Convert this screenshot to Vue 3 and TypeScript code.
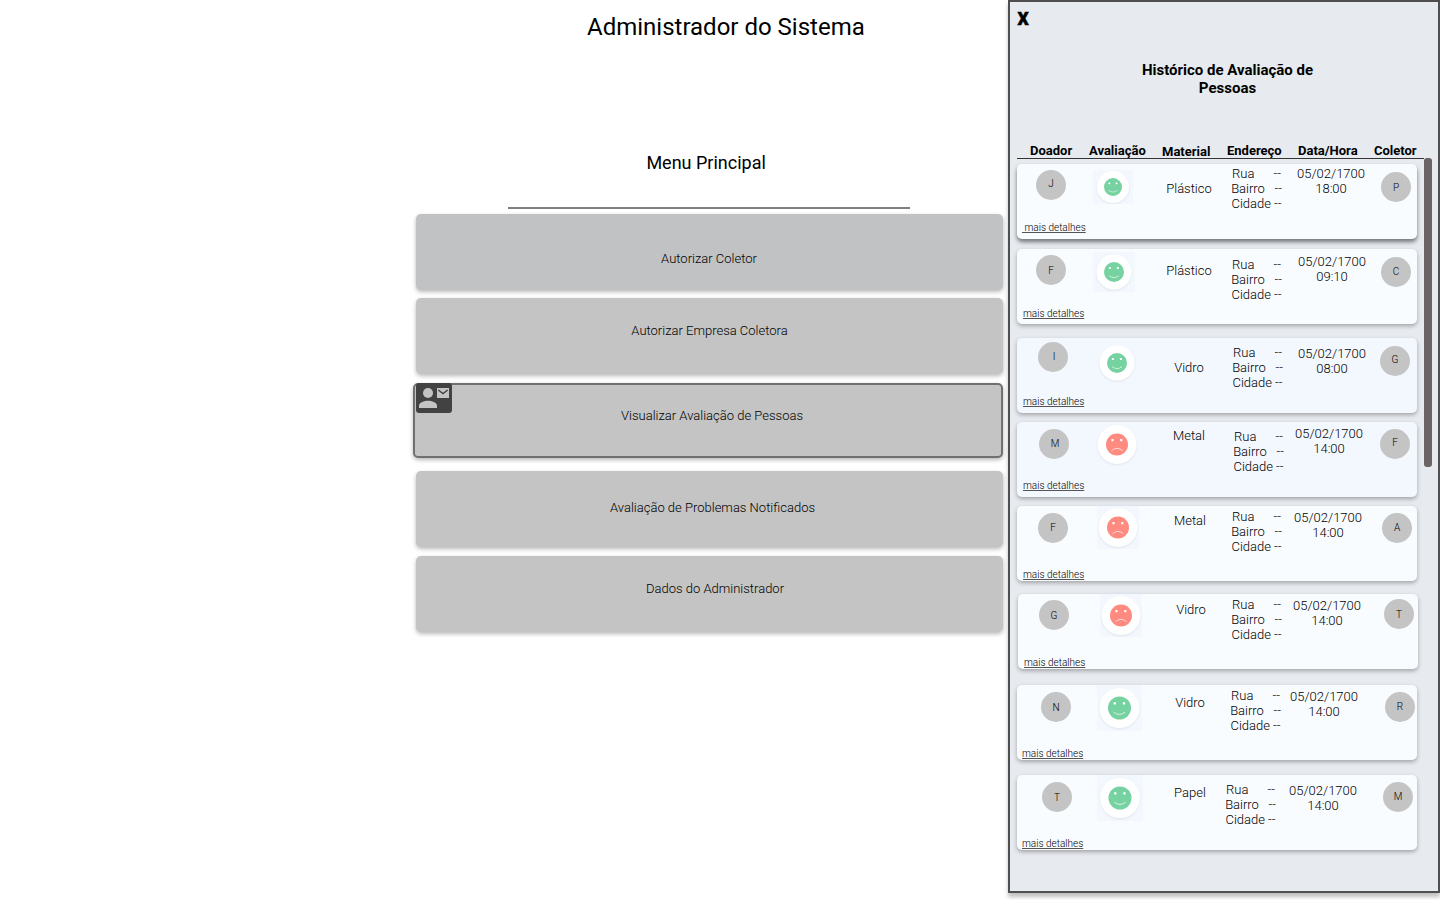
<script setup lang="ts">
type Point = [number, number]

interface Avatar {
  letter: string
  at: Point
  nudge: Point
}

interface Mood {
  happy: boolean
  at: Point
  size: Point
  center: Point
  ring: number
  face: number
}

interface Review {
  gap: number
  shift: number
  tone: 'light' | 'blue'
  strong?: boolean
  donor: Avatar
  mood: Mood
  material: string
  materialAt: Point
  addressAt: Point
  date: string
  time: string
  dateAt: Point
  collector: Avatar
  details: string
  detailsAt: Point
}

const menu = [
  { label: 'Autorizar Coletor', cls: 'first' },
  { label: 'Autorizar Empresa Coletora', cls: 'second' },
  { label: 'Visualizar Avaliação de Pessoas', cls: 'selected' },
  { label: 'Avaliação de Problemas Notificados', cls: 'fourth' },
  { label: 'Dados do Administrador', cls: 'fifth' },
]

const columns = [
  { label: 'Doador', cls: 'h-donor' },
  { label: 'Avaliação', cls: 'h-mood' },
  { label: 'Material', cls: 'h-material' },
  { label: 'Endereço', cls: 'h-address' },
  { label: 'Data/Hora', cls: 'h-date' },
  { label: 'Coletor', cls: 'h-collector' },
]

const address = ['Rua      --', 'Bairro   --', 'Cidade --']

// Offsets are relative to the start of each cell in the card grid.
const reviews: Review[] = [
  {
    gap: 0, shift: 0, tone: 'light', strong: true,
    donor: { letter: 'J', at: [19, 6], nudge: [0, -1] },
    mood: { happy: true, at: [4, 6], size: [40, 34], center: [20, 17], ring: 16, face: 9 },
    material: 'Plástico', materialAt: [-2, 17], addressAt: [0, 2],
    date: '05/02/1700', time: '18:00', dateAt: [0, 2],
    collector: { letter: 'P', at: [14, 8], nudge: [0, 0.5] },
    details: '\u00a0mais detalhes', detailsAt: [5, 58],
  },
  {
    gap: 10, shift: 0, tone: 'light',
    donor: { letter: 'F', at: [19, 6], nudge: [0, 1] },
    mood: { happy: true, at: [4, 3], size: [42, 40], center: [21, 20], ring: 17.5, face: 10 },
    material: 'Plástico', materialAt: [-2, 14], addressAt: [0, 8],
    date: '05/02/1700', time: '09:10', dateAt: [1, 5],
    collector: { letter: 'C', at: [14, 8], nudge: [0, 0] },
    details: 'mais detalhes', detailsAt: [6, 59],
  },
  {
    gap: 14, shift: 0, tone: 'blue',
    donor: { letter: 'I', at: [21, 4], nudge: [1, 0] },
    mood: { happy: true, at: [7, 5], size: [42, 40], center: [21, 20], ring: 17.5, face: 10 },
    material: 'Vidro', materialAt: [-2, 22], addressAt: [1, 7],
    date: '05/02/1700', time: '08:00', dateAt: [1, 8],
    collector: { letter: 'G', at: [13, 8], nudge: [0, -1] },
    details: 'mais detalhes', detailsAt: [6, 58],
  },
  {
    gap: 9, shift: 0, tone: 'blue',
    donor: { letter: 'M', at: [22, 7], nudge: [1, 0] },
    mood: { happy: false, at: [7, 1], size: [42, 43], center: [21, 21.5], ring: 19.5, face: 11 },
    material: 'Metal', materialAt: [-2, 6], addressAt: [2, 7],
    date: '05/02/1700', time: '14:00', dateAt: [-2, 4],
    collector: { letter: 'F', at: [13, 7], nudge: [0, -1] },
    details: 'mais detalhes', detailsAt: [6, 58],
  },
  {
    gap: 9, shift: 0, tone: 'light',
    donor: { letter: 'F', at: [21, 7], nudge: [0, 0] },
    mood: { happy: false, at: [8, 0], size: [42, 43], center: [21, 21.5], ring: 19.5, face: 11 },
    material: 'Metal', materialAt: [-1, 7], addressAt: [0, 3],
    date: '05/02/1700', time: '14:00', dateAt: [-3, 4],
    collector: { letter: 'A', at: [15, 7], nudge: [0, 0] },
    details: 'mais detalhes', detailsAt: [6, 63],
  },
  {
    gap: 13, shift: 1, tone: 'light',
    donor: { letter: 'G', at: [21, 6], nudge: [0, 1] },
    mood: { happy: false, at: [10, 0], size: [42, 43], center: [21, 21.5], ring: 19.5, face: 11 },
    material: 'Vidro', materialAt: [-1, 8], addressAt: [-1, 3],
    date: '05/02/1700', time: '14:00', dateAt: [-5, 4],
    collector: { letter: 'T', at: [16, 5], nudge: [0, 1] },
    details: 'mais detalhes', detailsAt: [6, 63],
  },
  {
    gap: 16, shift: 0, tone: 'light',
    donor: { letter: 'N', at: [24, 7], nudge: [0, 1] },
    mood: { happy: true, at: [8, 0], size: [45, 46], center: [22.5, 23], ring: 20, face: 11.5 },
    material: 'Vidro', materialAt: [-1, 10], addressAt: [-1, 3],
    date: '05/02/1700', time: '14:00', dateAt: [-7, 4],
    collector: { letter: 'R', at: [18, 7], nudge: [0, 0] },
    details: 'mais detalhes', detailsAt: [5, 63],
  },
  {
    gap: 15, shift: 0, tone: 'light',
    donor: { letter: 'T', at: [25, 7], nudge: [0, 1] },
    mood: { happy: true, at: [8, 0], size: [46, 46], center: [23, 23], ring: 20, face: 11.5 },
    material: 'Papel', materialAt: [-1, 10], addressAt: [-6, 7],
    date: '05/02/1700', time: '14:00', dateAt: [-8, 8],
    collector: { letter: 'M', at: [16, 7], nudge: [0, 0] },
    details: 'mais detalhes', detailsAt: [5, 63],
  },
]

const offset = ([x, y]: Point) => ({ marginLeft: `${x}px`, marginTop: `${y}px` })
const pad = ([x, y]: Point) => ({ paddingLeft: `${x * 2}px`, paddingTop: `${Math.max(y, 0) * 2}px`, paddingBottom: `${Math.max(-y, 0) * 2}px` })
</script>

<template>
  <div class="screen">
    <main class="admin">
      <h1>Administrador do Sistema</h1>
      <h2>Menu Principal</h2>
      <hr />
      <nav class="menu">
        <button v-for="item in menu" :key="item.label" :class="['option', item.cls]">
          <span v-if="item.cls === 'selected'" class="badge">
            <svg width="36" height="30" viewBox="0 0 36 30">
              <ellipse cx="12" cy="10" rx="5" ry="5" fill="#c4c4c4" />
              <path d="M3 25v-2.300c0-3 5.500-4.900 9-4.900s9 1.900 9 4.900V25z" fill="#c4c4c4" />
              <path d="M21 5h12v10H21z" fill="#c4c4c4" />
              <path d="M22.300 6.900 27 10.600l4.700-3.700" fill="none" stroke="#424242" stroke-width="1.300" />
            </svg>
          </span>
          <span class="label">{{ item.label }}</span>
        </button>
      </nav>
    </main>

    <aside class="panel">
      <button class="close">X</button>
      <h3>Histórico de Avaliação de Pessoas</h3>
      <div class="heads">
        <span v-for="col in columns" :key="col.label" :class="col.cls">{{ col.label }}</span>
      </div>
      <div class="body">
        <div class="list">
          <article
            v-for="(r, i) in reviews"
            :key="i"
            :class="['card', r.tone, { strong: r.strong }]"
            :style="offset([r.shift, r.gap])"
          >
            <div class="avatar c1" :style="offset(r.donor.at)">
              <span :style="pad(r.donor.nudge)">{{ r.donor.letter }}</span>
            </div>
            <svg class="mood c2" :style="offset(r.mood.at)" :width="r.mood.size[0]" :height="r.mood.size[1]">
              <rect width="100%" height="100%" fill="#f3f8ff" />
              <g :transform="`translate(${r.mood.center[0]} ${r.mood.center[1]})`">
                <circle class="ring" :r="r.mood.ring" fill="#fff" />
                <g :transform="`scale(${r.mood.face / 10})`">
                  <circle r="10" :fill="r.mood.happy ? '#76d2a0' : '#ff8a80'" />
                  <rect x="-5.100" y="-5" width="2" height="2" rx=".5" fill="#fff" />
                  <rect x="2.900" y="-5" width="2" height="2" rx=".5" fill="#fff" />
                  <path
                    :d="r.mood.happy ? 'M-5 3.600Q0 7.600 5 3.600' : 'M-5 5.600Q0 1.400 5 5.600'"
                    fill="none"
                    stroke="#fff"
                    stroke-opacity=".75"
                    stroke-width=".8"
                  />
                </g>
              </g>
            </svg>
            <span class="material c3" :style="offset(r.materialAt)">{{ r.material }}</span>
            <div class="address c4" :style="offset(r.addressAt)">
              <span v-for="line in address" :key="line">{{ line }}</span>
            </div>
            <div class="date c5" :style="offset(r.dateAt)">
              <span>{{ r.date }}</span>
              <span>{{ r.time }}</span>
            </div>
            <div class="avatar c6" :style="offset(r.collector.at)">
              <span :style="pad(r.collector.nudge)">{{ r.collector.letter }}</span>
            </div>
            <a class="details" :style="offset(r.detailsAt)">{{ r.details }}</a>
          </article>
        </div>
        <div class="scrollbar"></div>
      </div>
    </aside>
  </div>
</template>

<style>
body {
  margin: 0;
  background: #fff;
}
</style>

<style scoped>
.screen {
  display: flex;
  width: 1440px;
  height: 900px;
  overflow: hidden;
  background: #fff;
  font-family: Roboto, sans-serif;
  color: #000;
}
.screen * {
  box-sizing: border-box;
}
button {
  font: inherit;
  color: inherit;
  border: 0;
  padding: 0;
  text-align: inherit;
}
.admin {
  width: 1008px;
  flex: none;
}
h1 {
  margin: 13px 0 0 587px;
  font-size: 24px;
  line-height: 28px;
  font-weight: 400;
}
h2 {
  margin: 111px 0 0 646.400px;
  font-size: 18px;
  line-height: 22px;
  font-weight: 400;
}
hr {
  width: 402px;
  height: 2px;
  margin: 33px 0 0 508px;
  border: 0;
  background: #808080;
}
.menu {
  display: flex;
  flex-direction: column;
  align-items: flex-end;
  width: 1003px;
  margin-top: 5px;
}
.option {
  display: flex;
  width: 587px;
  height: 76px;
  border-radius: 5px;
  background: #c4c4c4;
  box-shadow: 0 2px 4px rgba(0, 0, 0, 0.28);
  font-size: 13px;
  line-height: 15px;
  font-weight: 300;
}
.label {
  flex: 1;
  text-align: center;
}
.first {
  background: #c1c2c4;
  padding: 37px 1px 0 0;
}
.second {
  margin-top: 8px;
  padding-top: 25px;
}
.selected {
  position: relative;
  width: 590px;
  height: 75px;
  margin-top: 9px;
  padding: 23px 0 0 8px;
  border: 2px solid #707070;
}
.fourth {
  margin-top: 13px;
  padding: 29px 0 0 6px;
}
.fifth {
  margin-top: 9px;
  padding: 25px 0 0 11px;
}
.badge {
  position: absolute;
  left: 1px;
  top: -2px;
  width: 36px;
  height: 30px;
  border-radius: 3px;
  background: #424242;
}
.badge svg {
  display: block;
}
.panel {
  flex: none;
  width: 432px;
  height: 893px;
  border: 2px solid #4f4f4f;
  background: #e7eaef;
  box-shadow: 0 4px 4px rgba(0, 0, 0, 0.25);
}
.close {
  display: block;
  margin: 6px 0 0 7.400px;
  height: 22px;
  background: none;
  font-size: 17.500px;
  line-height: 22px;
  font-weight: 900;
  -webkit-text-stroke: 0.5px #000;
}
h3 {
  width: 200px;
  margin: 31px 0 0 117.500px;
  text-align: center;
  font-size: 15px;
  line-height: 18px;
  font-weight: 700;
}
.heads {
  display: flex;
  width: 407px;
  height: 16px;
  margin: 46px 0 0 7px;
  border-bottom: 1px solid #333;
  font-size: 13px;
  line-height: 15px;
  font-weight: 700;
  white-space: nowrap;
}
.heads span {
  flex: none;
}
.h-donor {
  width: 59px;
  margin-left: 13px;
}
.h-mood {
  width: 73px;
}
.h-material {
  width: 65px;
  padding-top: 1px;
}
.h-address {
  width: 71px;
}
.h-date {
  width: 76px;
}
.body {
  display: flex;
  margin: -1px 0 0 7px;
}
.list {
  width: 407px;
  padding-top: 6px;
}
.card {
  display: grid;
  grid-template-columns: 72px 72px 60px 66px 80px 50px;
  grid-template-rows: 75px;
  align-items: start;
  width: 400px;
  height: 75px;
  border-radius: 5px;
  box-shadow: 0 2px 4px rgba(0, 0, 0, 0.3);
  font-size: 13px;
  line-height: 15px;
  font-weight: 300;
}
.card > * {
  grid-row: 1;
}
.strong {
  box-shadow: 0 3px 4px rgba(0, 0, 0, 0.5);
}
.light {
  background: #f9fcff;
}
.blue {
  background: #f3f8ff;
}
.c1 { grid-column: 1; }
.c2 { grid-column: 2; }
.c3 { grid-column: 3; }
.c4 { grid-column: 4; }
.c5 { grid-column: 5; }
.c6 { grid-column: 6; }
.avatar {
  display: flex;
  align-items: center;
  justify-content: center;
  width: 30px;
  height: 30px;
  border-radius: 50%;
  background: #c4c4c4;
  font-size: 10px;
  line-height: 12px;
}
.ring {
  filter: drop-shadow(0 1px 1px rgba(0, 0, 0, 0.08));
}
.material {
  width: 60px;
  text-align: center;
}
.address,
.date {
  display: flex;
  flex-direction: column;
  align-items: center;
  white-space: pre;
}
.address {
  width: 71px;
}
.date {
  width: 88px;
}
.details {
  grid-column: 1;
  font-size: 10px;
  line-height: 12px;
  text-decoration: underline;
  text-decoration-color: #555;
  white-space: nowrap;
}
.scrollbar {
  width: 8px;
  height: 309px;
  border-radius: 3px;
  background: #6a6464;
}
</style>
